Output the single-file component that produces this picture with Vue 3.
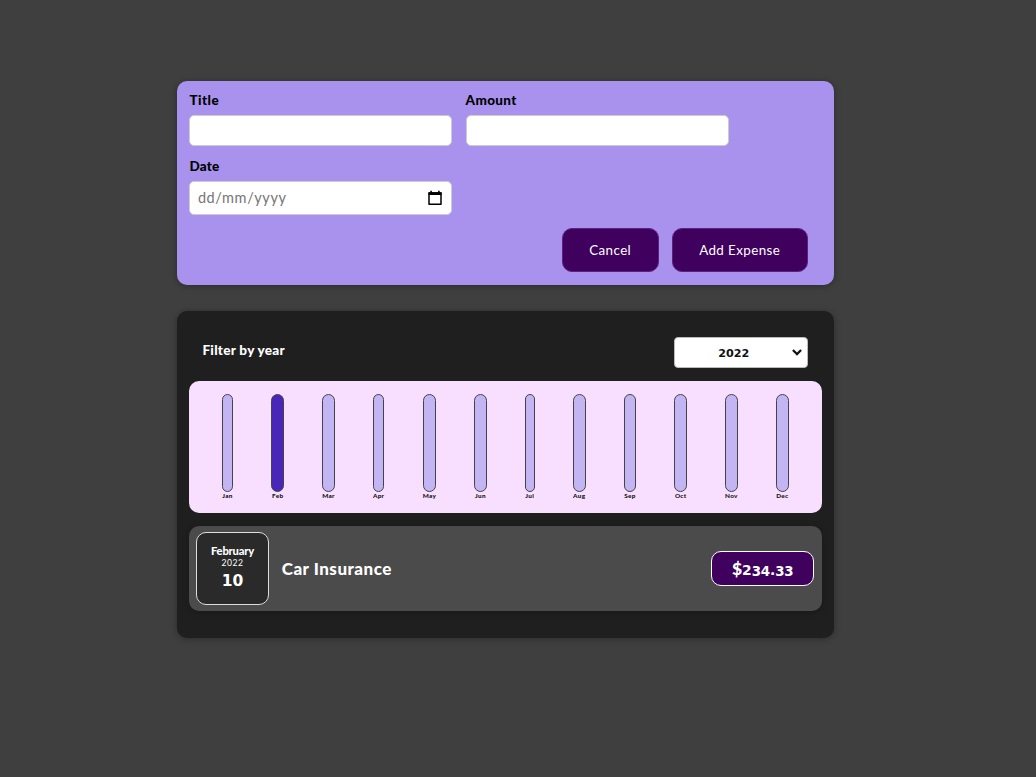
<script setup>
const months = [
  { name: 'Jan', width: 11.6 },
  { name: 'Feb', width: 12.6, full: true },
  { name: 'Mar', width: 12.4 },
  { name: 'Apr', width: 11.6 },
  { name: 'May', width: 13.6 },
  { name: 'Jun', width: 12.2 },
  { name: 'Jul', width: 9.8 },
  { name: 'Aug', width: 12.9 },
  { name: 'Sep', width: 12.4 },
  { name: 'Oct', width: 12.6 },
  { name: 'Nov', width: 12.6 },
  { name: 'Dec', width: 12.6 }
]
const price = [...'$234.33']
const priceClass = (c) => ('34'.includes(c) ? 'old low' : c === '$' ? 'tall' : 'old')
</script>

<template>
  <main class="page">
    <form class="form-card" @submit.prevent>
      <div class="fields">
        <label class="field"><span class="t-title">Title</span><input type="text" /></label>
        <label class="field"><span class="t-amount">Amount</span><input type="text" /></label>
        <div class="field">
          <span class="t-date">Date</span>
          <div class="date-input">
            <span class="placeholder">dd/mm/yyyy</span>
            <svg width="14" height="16" viewBox="0 0 14 16">
              <path d="M1 3h12v11.2H1z" fill="none" stroke="#000" stroke-width="1.5" stroke-linejoin="round" />
              <path d="M.5 2.3h13v2.6H.5zM2.3.8h1.6v2H2.3zM10.1.8h1.6v2h-1.6z" />
            </svg>
          </div>
        </div>
      </div>
      <div class="actions">
        <button class="cancel" type="button"><span>Cancel</span></button>
        <button class="add" type="submit"><span>Add Expense</span></button>
      </div>
    </form>

    <section class="expenses">
      <header class="filter">
        <span class="filter-label">Filter by year</span>
        <div class="select">
          <span class="year">2022</span>
          <svg width="10" height="7" viewBox="0 0 10 7"><path d="M.9 1 5 5.1 9.1 1" fill="none" stroke="#111" stroke-width="2.2" /></svg>
        </div>
      </header>
      <div class="chart">
        <div v-for="m in months" :key="m.name" class="month" :style="{ width: m.width + 'px' }">
          <div class="bar" :class="{ full: m.full }"></div>
          <span class="month-name">{{ m.name }}</span>
        </div>
      </div>
      <article class="item">
        <div class="date">
          <span class="date-month">February</span>
          <span class="date-year">2022</span>
          <span class="date-day">10</span>
        </div>
        <h2>Car Insurance</h2>
        <div class="price"><span v-for="(c, i) in price" :key="i" :class="priceClass(c)">{{ c }}</span></div>
      </article>
    </section>
  </main>
</template>

<style>
body { margin: 0; background: #3f3f3f; }
</style>

<style scoped>
* { box-sizing: border-box; }
.page { width: 657.3px; height: 777px; margin-left: 176.9px; padding-top: 80.7px; font-family: Lato, "Open Sans", sans-serif; }
.form-card { height: 204.3px; padding: 12.5px; background: #a892ee; border-radius: 10px; box-shadow: 0 1px 7px rgba(0, 0, 0, .3); }
.fields { display: grid; grid-template-columns: 263px 263px; grid-template-rows: 66px 55.5px; column-gap: 13.2px; }
.field { display: flex; flex-direction: column; font-size: 13.5px; font-weight: 900; color: #000; }
.field > span { height: 16px; line-height: 15px; margin-bottom: 6.3px; white-space: nowrap; }
.t-title { letter-spacing: .5px; }
.t-amount { letter-spacing: .35px; }
.t-date { letter-spacing: .25px; }
input, .date-input { width: 263px; height: 31px; background: #fff; border: 1px solid #ccc; border-radius: 5px; outline: 0; }
.date-input { height: 34px; display: flex; align-items: center; justify-content: space-between; padding: 0 9.5px 0 7.5px; }
.placeholder { font-size: 14.5px; font-weight: 400; line-height: 17px; color: #757575; letter-spacing: .6px; }
.actions { display: flex; justify-content: flex-end; gap: 13px; margin: 13.5px 14px 0 0; }
button { height: 43.5px; padding: 0; background: #40005d; border: 1px solid #5b2380; border-radius: 10px; color: #fff; font: 400 13.4px Lato, sans-serif; white-space: nowrap; }
.cancel { width: 97px; }
.add { width: 136px; }
.cancel span { letter-spacing: .4px; }
.add span { letter-spacing: .4px; }

.expenses { height: 326.5px; margin-top: 26.5px; padding: 12.5px; background: #1f1f1f; border-radius: 10px; box-shadow: 0 1px 7px rgba(0, 0, 0, .3); }
.filter { height: 57px; display: flex; justify-content: space-between; padding: 13.5px 14px 0 13px; color: #fff; }
.filter-label { font-size: 13.6px; font-weight: 900; line-height: 26px; letter-spacing: .26px; white-space: nowrap; }
.select { width: 133.3px; height: 30.5px; display: flex; align-items: center; justify-content: flex-end; padding: 0 4.5px 0 0; background: #fff; border: 1px solid #bbb; border-radius: 4px; color: #111; }
.year { width: 32px; margin-right: 42px; font: 700 11.2px "DejaVu Sans", sans-serif; padding-top: 2px; }
.chart { height: 132px; display: flex; justify-content: space-around; padding: 13.4px 14px 0 13.2px; background: #f8dfff; border-radius: 10px; }
.month { height: 107px; display: flex; flex-direction: column; align-items: center; }
.bar { width: 100%; height: 98px; flex: none; background: #c3b4f3; border: 1px solid #444; border-radius: 10px; }
.bar.full { background: #4826b9; }
.month-name { font-size: 6.4px; font-weight: 900; line-height: 8px; color: #111; letter-spacing: .3px; }
.item { height: 85.5px; display: flex; align-items: center; margin-top: 13px; padding: 0 7.5px 0 7px; background: #4b4b4b; border-radius: 10px; box-shadow: 0 1px 6px rgba(0, 0, 0, .25); }
.date { width: 72.3px; height: 73.5px; display: flex; flex-direction: column; align-items: center; padding-top: 11.5px; background: #2a2a2a; border: 1px solid #ddd; border-radius: 10px; color: #fff; }
.date-month { font-size: 11.2px; font-weight: 900; line-height: 14px; letter-spacing: -.2px; }
.date-year { font-size: 8.6px; line-height: 10px; letter-spacing: .55px; }
.date-day { margin-top: 4px; font: 700 15.5px/19px "DejaVu Sans", sans-serif; }
h2 { margin: 0 0 0 13px; font-size: 17px; font-weight: 900; line-height: 20px; letter-spacing: .5px; color: #fff; white-space: nowrap; }
.price { width: 103px; height: 34.5px; display: flex; align-items: baseline; justify-content: center; margin-left: auto; background: #40005d; border: 1px solid #fff; border-radius: 10px; color: #fff; font: 900 17.5px/33px Lato, sans-serif; }
.old { font: 700 13.8px/33px "DejaVu Sans", sans-serif; }
.low { font-size: 13.4px; letter-spacing: -.2px; transform: translateY(1px); }
</style>
